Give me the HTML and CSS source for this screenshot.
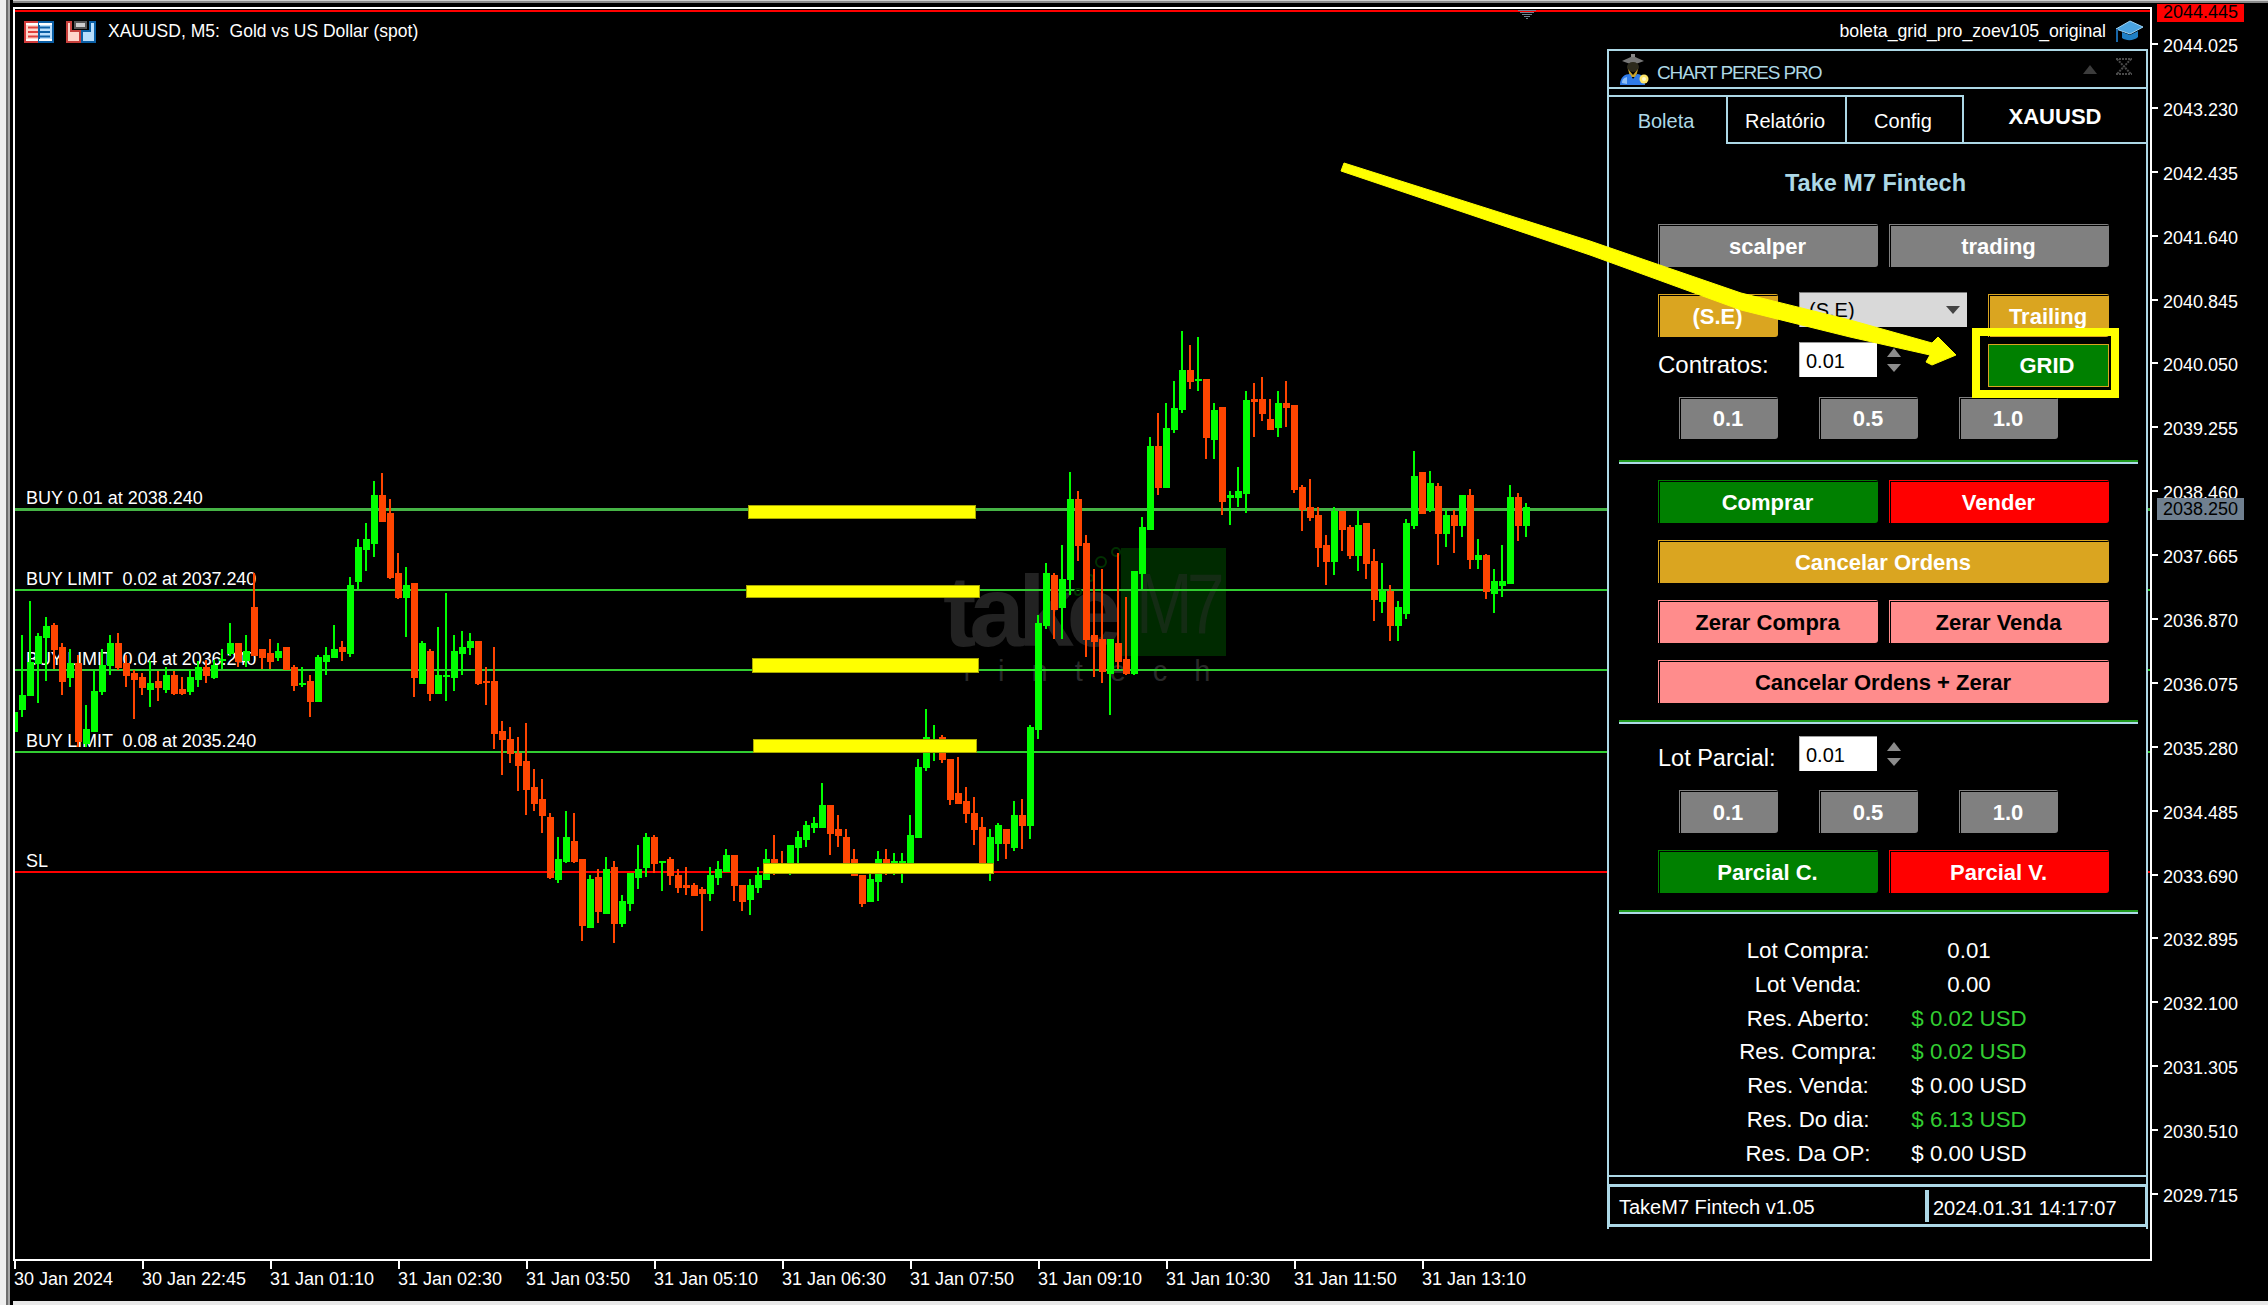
FILE: index.html
```html
<!DOCTYPE html>
<html lang="pt">
<head>
<meta charset="utf-8">
<title>XAUUSD M5</title>
<link rel="stylesheet" href="styles.css">
</head>
<body>
<div class="page">
  <div class="terminal">
    <div class="edge"></div>
    <div class="strip-top"></div>
    <div class="strip-gap"></div>

    <main class="chart">
      <div class="watermark">
        <span class="wm-take">take</span>
        <span class="wm-box"><span class="wm-m7">M7</span></span>
        <span class="wm-fin">fintech</span>
      </div>
      <div class="level lvl-1">BUY 0.01 at 2038.240</div>
      <div class="level lvl-2">BUY LIMIT&nbsp; 0.02 at 2037.240</div>
      <div class="level lvl-3">BUY LIMIT&nbsp; 0.04 at 2036.240</div>
      <div class="level lvl-4">BUY LIMIT&nbsp; 0.08 at 2035.240</div>
      <div class="level lvl-sl">SL</div>

      <svg class="candles" width="2268" height="1305" viewBox="0 0 2268 1305" aria-hidden="true">
        <g class="wm-dots">
          <circle cx="1116" cy="552" r="4"/><circle cx="1101" cy="562" r="5"/><circle cx="1090" cy="578" r="3"/><circle cx="1078" cy="592" r="3"/>
        </g>
        <g transform="translate(6 470) scale(8 .33333)">
          <path class="wick up" d="M1 700V800M2 495V740M3 393V678M4 490V698M5 441V633M8 537V650M10 705V830M11 600V787M12 537V675M13 495V615M18 573V711M20 591V669M23 600V675M24 573V651M26 570V627M27 537V598M28 459V558M30 495V591M34 519V573M37 591V651M39 555V697M40 531V615M41 465V564M43 321V561M44 207V357M45 159V303M46 33V261M50 291V501M52 513V642M54 471V672M55 369V693M56 495V663M57 483V615M58 489V555"/>
          <path class="body up" d="M1 725V785M2 675V720M3 575V678M4 497V583M5 467V503M8 580V625M10 778V822M11 664V785M12 586V665M13 520V588M18 640V660M20 616V660M23 622V666M24 592V630M26 586V624M27 568V572M28 520V553M30 544V572M34 544V564M37 640V644M39 562V696M40 556V576M41 538V564M43 346V552M44 232V335M45 208V240M46 76V222M50 346V384M52 520V642M54 616V672M55 616V622M56 544V624M57 532V552M58 514V534"/>
          <path class="wick dn" d="M6 459V597M7 519V675M9 555V830M14 489V600M15 555V651M16 600V747M17 609V675M19 603V693M21 603V675M22 621V675M25 570V639M29 519V590M31 310V558M32 538V597M33 507V597M35 532V600M36 585V663M38 615V741M42 513V573M47 9V155M48 87V327M49 249V387M51 340V681M53 537V693M59 514V645M60 591V705M61 531V837"/>
          <path class="body dn" d="M6 465V540M7 532V635M9 580V815M14 520V595M15 580V618M16 610V630M17 622V653M19 634V654M21 616V672M22 658V672M25 592V618M29 520V575M31 412V558M32 538V564M33 550V576M35 532V600M36 592V648M38 634V696M42 532V546M47 76V155M48 130V325M49 310V385M51 340V624M53 544V672M59 514V642M60 634V640M61 634V792"/>
        </g>
        <g transform="translate(6 700) scale(8 .33333)">
          <path class="wick up" d="M69 411V549M70 333V489M73 525V684M75 471V642M77 585V681M78 519V633M79 435V567M80 399V531M82 483V573M88 501V603M89 483V555M90 447V516M93 537V645M94 501V579M95 447V540M98 435V525M99 393V490M100 363V441M101 351V399M102 249V384M108 520V606M109 453V603M111 459V525M112 459V549M113 345V490M114 177V414M115 27V213M116 75V183M123 387V543M124 369V483M126 303V453M128 75V417"/>
          <path class="body up" d="M69 478V540M70 412V486M73 538V684M75 508V642M77 604V672M78 520V612M79 508V534M80 412V504M82 484V488M88 526V582M89 508V534M90 466V516M93 556V600M94 526V564M95 478V540M98 436V522M99 412V444M100 376V420M101 370V384M102 316V384M108 538V606M109 478V546M111 484V520M112 484V520M113 406V490M114 202V414M115 112V204M116 118V160M123 412V520M124 376V432M126 346V444M128 82V378"/>
          <path class="wick dn" d="M62 63V225M63 81V189M64 111V273M65 69V345M66 207V333M67 237V399M68 339V537M71 339V489M72 478V723M74 507V669M76 483V729M81 405V519M83 471V555M84 507V579M85 501V585M86 549V588M87 561V693M91 465V603M92 555V633M96 405V525M97 453V522M103 316V465M104 345V441M105 387V520M106 447V528M107 525V621M110 447V525M117 105V189M118 177V315M119 171V312M120 261V369M121 291V435M122 351V490M125 387V477M127 297V447"/>
          <path class="body dn" d="M62 94V120M63 118V162M64 160V198M65 184V270M66 262V312M67 298V348M68 352V534M71 424V486M72 478V678M74 532V636M76 502V672M81 412V492M83 478V528M84 526V564M85 556V564M86 556V588M87 568V582M91 466V558M92 556V606M96 478V520M97 490V520M103 316V402M104 388V408M105 412V490M106 478V528M107 526V612M110 478V522M117 112V180M118 178V300M119 280V312M120 304V342M121 340V390M122 382V490M125 388V432M127 346V378"/>
        </g>
        <g transform="translate(6 480) scale(8 .33333)">
          <path class="wick up" d="M129 405V777M130 249V447M132 195V477M133 -25V345M138 477V705M141 273V585M142 111V327M166 82V285M169 91V273M172 249V399M174 363V483M175 117V417M176 -87V147M178 -27V97M180 90V201M182 46V171M184 177V267M186 267V399M187 195V351M188 15V312M190 69V171"/>
          <path class="body up" d="M129 430V750M130 280V438M132 298V384M133 58V300M138 478V582M141 274V582M142 142V282M166 94V246M169 136V228M172 334V366M174 382V438M175 130V402M176 -12V138M178 10V90M180 105V162M182 46V138M184 226V240M186 304V342M187 304V318M188 52V312M190 82V138"/>
          <path class="wick dn" d="M131 280V477M134 33V243M135 165V531M136 267V591M137 267V609M139 219V567M140 351V585M162 15V153M163 -3V123M164 81V261M165 165V315M167 93V213M168 135V237M170 130V297M171 207V423M173 315V483M177 -24V102M179 9V255M181 90V219M183 27V267M185 222V357M189 39V183"/>
          <path class="body dn" d="M131 286V390M134 58V198M135 190V480M136 465V486M137 478V576M139 490V546M140 538V582M162 22V90M163 82V114M164 106V204M165 196V246M167 94V150M168 142V228M170 130V252M171 244V360M173 334V438M177 -24V102M179 17V162M181 106V138M183 46V240M185 226V336M189 52V138"/>
        </g>
        <g transform="translate(6 320) scale(8 .33333)">
          <path class="wick up" d="M143 351V630M145 249V504M146 183V339M147 33V279M149 51V213M151 249V417M153 513V615M154 441V561M155 213V579M159 213V351"/>
          <path class="body up" d="M143 378V630M145 324V504M146 264V330M147 150V270M149 178V182M151 270V360M153 526V534M154 514V534M155 240V522M159 250V324"/>
          <path class="wick dn" d="M144 279V525M148 75V207M150 178V417M152 261V585M156 189V351M157 171V303M158 237V330M160 183V321M161 256V519"/>
          <path class="body dn" d="M144 378V504M148 150V186M150 178V354M152 262V546M156 238V246M157 238V282M158 298V330M160 250V264M161 256V510"/>
        </g>
        <g class="bars">
          <rect x="748.5" y="505.5" width="227" height="13"/>
          <rect x="746.5" y="585.5" width="233" height="12"/>
          <rect x="752.5" y="658.5" width="226" height="14"/>
          <rect x="753.5" y="739.5" width="223" height="13"/>
          <rect x="763.5" y="863.5" width="230" height="10"/>
        </g>
      </svg>

      <header class="chart-head">
        <div class="head-left">
          <svg class="ico" width="30" height="22" viewBox="0 0 30 22" aria-hidden="true">
            <rect x="1" y="1" width="14" height="20" fill="#ffd6cc" stroke="#d23c3c" stroke-width="2"/>
            <rect x="2" y="2" width="13" height="2" fill="#fff"/><rect x="2" y="18" width="13" height="2" fill="#fff"/>
            <path d="M4 6.500H14M4 11H14M4 15.500H14" stroke="#e0403c" stroke-width="2"/>
            <rect x="15" y="1" width="14" height="20" fill="#b9defc" stroke="#0b5fa5" stroke-width="2"/>
            <rect x="15" y="2" width="13" height="2" fill="#fff"/><rect x="15" y="18" width="13" height="2" fill="#fff"/>
            <path d="M16 6.500H26M16 11H26M16 15.500H26" stroke="#0b5fa5" stroke-width="2"/>
          </svg>
          <svg class="ico ico-2" width="30" height="22" viewBox="0 0 30 22" aria-hidden="true">
            <path d="M1 1H5V10H14V21H1Z" fill="#ffd6cc" stroke="#c8403c" stroke-width="2"/>
            <path d="M29 1H24V10H16V21H29Z" fill="#b9defc" stroke="#0b5fa5" stroke-width="2"/>
            <rect x="9" y="1" width="11" height="6" fill="#ccc" stroke="#555" stroke-width="2"/>
          </svg>
          <span class="symbol">XAUUSD, M5:  Gold vs US Dollar (spot)</span>
        </div>
        <div class="head-right">
          <span class="ea-name">boleta_grid_pro_zoev105_original</span>
          <svg width="29" height="23" viewBox="0 0 29 23" aria-hidden="true">
            <path d="M1 9L15 1L28 7L15 14Z" fill="#4aa3e0" stroke="#9fd4f5"/>
            <path d="M7 12V18C11 21 19 21 23 17V11L15 15Z" fill="#1f7fc4"/>
            <path d="M2 9V22" stroke="#1766a8" stroke-width="2"/>
          </svg>
        </div>
      </header>
    </main>

    <aside class="price-axis">
      <div class="price">2044.025</div><div class="price">2043.230</div><div class="price">2042.435</div><div class="price">2041.640</div><div class="price">2040.845</div><div class="price">2040.050</div><div class="price">2039.255</div><div class="price">2038.460</div><div class="price">2037.665</div><div class="price">2036.870</div><div class="price">2036.075</div><div class="price">2035.280</div><div class="price">2034.485</div><div class="price">2033.690</div><div class="price">2032.895</div><div class="price">2032.100</div><div class="price">2031.305</div><div class="price">2030.510</div><div class="price">2029.715</div>
    </aside>

    <nav class="time-axis">
      <div class="time">30 Jan 2024</div><div class="time">30 Jan 22:45</div><div class="time">31 Jan 01:10</div><div class="time">31 Jan 02:30</div><div class="time">31 Jan 03:50</div><div class="time">31 Jan 05:10</div><div class="time">31 Jan 06:30</div><div class="time">31 Jan 07:50</div><div class="time">31 Jan 09:10</div><div class="time">31 Jan 10:30</div><div class="time">31 Jan 11:50</div><div class="time">31 Jan 13:10</div>
    </nav>
    <div class="strip-bottom"></div>
  </div>

  <div class="price-tag tag-ask">2044.445</div>
  <div class="price-tag tag-bid">2038.250</div>

  <section class="panel">
    <div class="caption">
      <svg width="30" height="31" viewBox="0 0 30 31" aria-hidden="true">
        <path d="M3 7L14 2L25 7L14 11Z" fill="#777"/>
        <rect x="12" y="0" width="4" height="3" fill="#888"/>
        <ellipse cx="14" cy="13" rx="6" ry="5" fill="#2c2a1c"/>
        <path d="M9 15L14 21L19 15L17 23H11Z" fill="#c9a227"/>
        <path d="M1 31C1 23 6 20 11 20L14 25L18 20C23 20 26 24 26 31Z" fill="#2f7be8"/>
        <path d="M3 29C3 25 5 24 8 23V30Z" fill="#8fc0f8"/>
        <circle cx="25" cy="25" r="4.500" fill="#ffe76a"/>
        <circle cx="25" cy="25" r="2" fill="#fffbd0"/>
      </svg>
      <span class="cap-title">CHART PERES PRO</span>
      <svg class="cap-min" width="14" height="9" viewBox="0 0 14 9" aria-hidden="true"><path d="M7 0L14 9H0Z"/></svg>
      <svg class="cap-close" width="18" height="17" viewBox="0 0 18 17" aria-hidden="true">
        <path d="M1 1H17M1 16H17M2 1L16 16M16 1L2 16" stroke-dasharray="2 1"/>
      </svg>
    </div>
    <div class="tabs">
      <div class="tab tab-active">Boleta</div>
      <div class="tab tab-mid">Relatório</div>
      <div class="tab tab-last">Config</div>
      <div class="tab-symbol">XAUUSD</div>
    </div>
    <div class="panel-body">
      <h1 class="panel-title">Take M7 Fintech</h1>
      <div class="row-two mt-scalper">
        <div class="btn gray">scalper</div>
        <div class="btn gray">trading</div>
      </div>
      <div class="row-mode">
        <div class="btn gold mode-btn">(S.E)</div>
        <div class="select"><span>(S.E)</span><svg width="14" height="8" viewBox="0 0 14 8" aria-hidden="true"><path d="M0 0H14L7 8Z"/></svg></div>
        <div class="btn gold mode-btn">Trailing</div>
      </div>
      <div class="row-lot">
        <div class="lot-label contracts">Contratos:</div>
        <div class="input">0.01</div>
        <div class="spin"><i class="spin-up"></i><i class="spin-down"></i></div>
        <div class="btn grid-btn">GRID</div>
      </div>
      <div class="row-three short mt-10">
        <div class="btn gray">0.1</div><div class="btn gray">0.5</div><div class="btn gray">1.0</div>
      </div>
      <div class="sep mt-21"></div>
      <div class="row-two mt-16">
        <div class="btn green">Comprar</div>
        <div class="btn red">Vender</div>
      </div>
      <div class="btn gold wide mt-17">Cancelar Ordens</div>
      <div class="row-two mt-17">
        <div class="btn pink">Zerar Compra</div>
        <div class="btn pink">Zerar Venda</div>
      </div>
      <div class="btn pink wide mt-17">Cancelar Ordens + Zerar</div>
      <div class="sep mt-17"></div>
      <div class="row-lot row-partial">
        <div class="lot-label">Lot Parcial:</div>
        <div class="input">0.01</div>
        <div class="spin"><i class="spin-up"></i><i class="spin-down"></i></div>
      </div>
      <div class="row-three mt-19">
        <div class="btn gray">0.1</div><div class="btn gray">0.5</div><div class="btn gray">1.0</div>
      </div>
      <div class="row-two mt-17">
        <div class="btn green">Parcial C.</div>
        <div class="btn red">Parcial V.</div>
      </div>
      <div class="sep mt-17"></div>
      <div class="stats">
        <div>Lot Compra:</div><div>0.01</div>
        <div>Lot Venda:</div><div>0.00</div>
        <div>Res. Aberto:</div><div class="pos">$ 0.02 USD</div>
        <div>Res. Compra:</div><div class="pos">$ 0.02 USD</div>
        <div>Res. Venda:</div><div>$ 0.00 USD</div>
        <div>Res. Do dia:</div><div class="pos">$ 6.13 USD</div>
        <div>Res. Da OP:</div><div>$ 0.00 USD</div>
      </div>
    </div>
    <footer class="panel-foot">
      <span class="foot-name">TakeM7 Fintech v1.05</span>
      <span class="foot-date">2024.01.31 14:17:07</span>
    </footer>
  </section>

  <svg class="overlay" width="2268" height="1305" viewBox="0 0 2268 1305" aria-hidden="true">
    <g class="ask-mark">
      <rect x="1518" y="10" width="18" height="1"/><rect x="1520" y="12" width="14" height="1"/><rect x="1522" y="14" width="10" height="1"/><rect x="1524" y="16" width="6" height="1"/><rect x="1526" y="18" width="2" height="1"/>
    </g>
    <polygon class="arrow" points="1344,163 1590,241 1741,293 1850,320 1932,343 1938,337 1956,355 1932,365 1926,362 1930,355 1850,337 1741,310 1590,255 1341,171"/>
    <rect class="grid-mark" x="1976" y="332" width="139" height="62"/>
  </svg>
</div>
</body>
</html>
```

FILE: styles.css
```css
* { box-sizing: border-box; }
html, body { margin: 0; padding: 0; background: #000; overflow: hidden; }
body { font-family: "Liberation Sans", Arial, sans-serif; color: #fff; }

.page { position: relative; width: 2268px; height: 1305px; overflow: hidden; background: #000; }

.terminal {
  display: grid;
  width: 2268px;
  height: 1305px;
  grid-template-columns: 13px 2139px 116px;
  grid-template-rows: 3px 4px 1254px 40px 4px;
}
.edge {
  grid-column: 1;
  grid-row: 1 / -1;
  background: linear-gradient(90deg, #efefef 0 6px, #6f6f6f 6px 8px, #a8a8a8 8px 10px, #000 10px);
}
.strip-top { grid-column: 2 / -1; grid-row: 1; background: linear-gradient(#d0d0d0 0 1px, #8a8a8a 1px); }
.strip-gap { grid-column: 2 / -1; grid-row: 2; background: #000; }
.strip-bottom { grid-column: 2 / -1; grid-row: 5; background: #e8e8e8; }

/* chart */
.chart {
  grid-column: 2;
  grid-row: 3;
  position: relative;
  overflow: hidden;
  background: #000;
  border: 2px solid #fff;
}
.chart::before {
  content: "";
  position: absolute;
  left: 0; right: 0; top: 1px;
  height: 2px;
  background: #f00;
}
.candles { position: absolute; left: -15px; top: -9px; }
.wick, .body { fill: none; vector-effect: non-scaling-stroke; shape-rendering: crispEdges; }
.wick { stroke-width: 2px; }
.body { stroke-width: 7px; }
.up { stroke: #00ff00; }
.dn { stroke: #ff4500; }
.bars rect { fill: #ffff00; stroke: #a8a800; stroke-width: 1; }
.wm-dots circle { fill: none; stroke: #003000; stroke-width: 2; }

.level {
  position: absolute;
  left: 0; right: 0;
  height: 23px;
  padding-left: 11px;
  font-size: 18px;
  line-height: 23px;
  letter-spacing: -.1px;
  color: #fff;
  white-space: pre;
  border-bottom: 2px solid #32cd32;
}
.lvl-1 { top: 478px; border-bottom-width: 3px; border-bottom-color: #46b446; height: 24px; letter-spacing: 0; }
.lvl-2 { top: 559px; }
.lvl-3 { top: 639px; }
.lvl-4 { top: 721px; }
.lvl-sl { top: 841px; border-bottom-color: #f00; }

.watermark { position: absolute; left: 0; top: 0; width: 100%; height: 100%; }
.wm-take {
  position: absolute;
  left: 928px; top: 552px;
  font-size: 100px;
  line-height: 100px;
  font-weight: 700;
  letter-spacing: -7px;
  color: #222;
}
.wm-box { position: absolute; left: 1106px; top: 539px; width: 105px; height: 108px; background: #002a00; }
.wm-m7 {
  position: absolute;
  left: 15px; top: 12px;
  font-size: 68px;
  line-height: 86px;
  letter-spacing: -6px;
  color: #142c14;
  transform: scaleY(1.25);
}
.wm-fin {
  position: absolute;
  left: 948px; top: 646px;
  font-size: 29px;
  line-height: 32px;
  letter-spacing: 27px;
  color: #2a2a2a;
}

.chart-head {
  position: absolute;
  left: 0; right: 0; top: 11px;
  height: 23px;
  padding: 0 6px 0 9px;
  display: flex;
  justify-content: space-between;
  align-items: center;
}
.head-left, .head-right { display: flex; align-items: center; }
.ico-2 { margin-left: 12px; }
.symbol { margin-left: 12px; font-size: 17.500px; white-space: pre; }
.ea-name { margin-right: 9px; font-size: 17.700px; }

/* price axis */
.price-axis { grid-column: 3; grid-row: 3; padding-top: 36px; }
.price { position: relative; height: 63.900px; padding-left: 11px; font-size: 18px; line-height: 6px; color: #fff; }
.price::before { content: ""; position: absolute; left: 0; top: 0; width: 6px; height: 2px; background: #fff; }

.price-tag {
  position: absolute;
  left: 2157px;
  width: 87px;
  padding-left: 6px;
  font-size: 18px;
  color: #000;
}
.tag-ask { top: 4px; height: 18px; line-height: 17px; background: #f00; }
.tag-bid { top: 498px; height: 22px; line-height: 22px; background: #708090; }

/* time axis */
.time-axis { grid-column: 2 / -1; grid-row: 4; display: flex; padding-left: 1px; }
.time {
  position: relative;
  flex: 0 0 128px;
  padding: 9px 0 0 0;
  font-size: 18px;
  line-height: 18px;
  white-space: nowrap;
}
.time::before { content: ""; position: absolute; left: 0; top: 0; width: 2px; height: 8px; background: #fff; }

/* panel */
.panel {
  position: absolute;
  left: 1607px; top: 49px;
  width: 541px;
  height: 1180px;
  border: 2px solid #add8e6;
  border-bottom: 0;
  background: #000;
  display: flex;
  flex-direction: column;
}
.caption {
  flex: none;
  height: 38px;
  border-bottom: 2px solid #add8e6;
  display: flex;
  align-items: center;
  padding-left: 10px;
}
.cap-title { margin: 7px 0 0 8px; font-size: 19px; letter-spacing: -1.100px; color: #add8e6; }
.cap-min { margin-left: auto; fill: #3c3c3c; }
.cap-close { margin: 0 13px 6px 18px; fill: none; stroke: #4a4a4a; stroke-width: 2; }

.tabs { flex: none; display: flex; height: 49px; margin-top: 6px; }
.tab {
  height: 49px;
  padding: 1px 3px 0 0;
  border-top: 2px solid #add8e6;
  font-size: 20px;
  line-height: 47px;
  text-align: center;
  color: #fff;
}
.tab-active { width: 117px; color: #add8e6; }
.tab-mid { width: 119px; border-left: 2px solid #add8e6; border-bottom: 2px solid #add8e6; }
.tab-last { width: 119px; border-left: 2px solid #add8e6; border-right: 2px solid #add8e6; border-bottom: 2px solid #add8e6; }
.tab-symbol {
  flex: 1;
  height: 49px;
  border-bottom: 2px solid #add8e6;
  font-size: 22px;
  font-weight: 700;
  line-height: 44px;
  text-align: center;
}

.panel-body {
  flex: none;
  height: 1033px;
  padding-left: 49px;
  border-bottom: 2px solid #add8e6;
}
.panel-title {
  width: 533px;
  margin: 24px 0 0 -49px;
  font-size: 23.500px;
  font-weight: 700;
  line-height: 30px;
  text-align: center;
  color: #add8e6;
}
.mt-scalper { margin-top: 26px; }
.mt-10 { margin-top: 10px; }
.mt-16 { margin-top: 16px; }
.mt-17 { margin-top: 17px; }
.mt-19 { margin-top: 19px; }
.mt-21 { margin-top: 21px; }

.btn {
  --c: #808080;
  display: flex;
  align-items: center;
  justify-content: center;
  height: 43px;
  padding: 1px 0 0 1px;
  border-top: 1px solid var(--c);
  border-left: 1px solid var(--c);
  border-radius: 0 2px 3px 0;
  background: var(--c);
  background-clip: content-box;
  font-size: 22px;
  font-weight: 700;
  color: #fff;
  white-space: nowrap;
}
.btn::after { content: ""; flex: none; width: 3px; }
.gray { --c: #808080; }
.gold { --c: #daa520; }
.green { --c: #008000; }
.red { --c: #ff0000; }
.pink { --c: #ff8c8c; color: #000; }
.wide { width: 451px; }

.row-two { display: grid; grid-template-columns: 220px 220px; gap: 11px; height: 43px; }
.row-three { display: grid; grid-template-columns: repeat(3, 99px); gap: 41px; height: 43px; margin-left: 21px; }
.row-three.short { height: 42px; }
.short .btn { height: 42px; }
.row-mode { display: grid; grid-template-columns: 120px 168px 121px; gap: 21px; height: 45px; margin-top: 25px; }
.mode-btn { margin-top: 2px; }
.select {
  display: flex;
  align-items: center;
  justify-content: space-between;
  height: 35px;
  padding: 0 7px 0 9px;
  background: #d9d9d9;
  border-top: 1px solid #777;
  border-left: 1px solid #999;
  font-size: 20px;
  color: #000;
}
.select svg { fill: #444; }

.row-lot { display: grid; grid-template-columns: 141px 78px 111px 121px; height: 45px; margin-top: 5px; width: 451px; }
.row-lot > .grid-btn { grid-column: 4; }
.row-partial { height: 35px; margin-top: 12px; }
.lot-label { font-size: 23.500px; line-height: 35px; margin-top: 5px; white-space: nowrap; }
.contracts { font-size: 24px; }
.input {
  height: 35px;
  padding-left: 6px;
  background: #fff;
  border-top: 1px solid #999;
  border-left: 1px solid #bbb;
  font-size: 20px;
  line-height: 36px;
  color: #000;
}
.spin { display: flex; flex-direction: column; gap: 7px; margin: 6px 0 0 10px; }
.spin-up, .spin-down { display: block; width: 0; height: 0; border-left: 7px solid transparent; border-right: 7px solid transparent; }
.spin-up { border-bottom: 9px solid #8c8c8c; }
.spin-down { border-top: 8px solid #8c8c8c; }
.grid-btn {
  margin-top: 2px;
  padding: 0;
  border: 1px solid #daa520;
  border-radius: 0;
  background: #008000;
}

.sep {
  width: 519px;
  height: 4px;
  margin-left: -39px;
  border-top: 2px solid #1f9a1f;
  border-bottom: 2px solid #add8e6;
}
.stats {
  display: grid;
  grid-template-columns: 200px 122px;
  grid-auto-rows: 33.800px;
  margin: 20px 0 0 50px;
  font-size: 22.300px;
  line-height: 33.800px;
  text-align: center;
  white-space: nowrap;
}
.pos { color: #32cd32; }

.panel-foot {
  flex: none;
  display: flex;
  align-items: center;
  height: 43px;
  margin: 7px -2px 0;
  padding-left: 9px;
  border: 3px solid #add8e6;
  font-size: 20px;
}
.foot-name { width: 306px; margin-top: 3px; }
.foot-date { height: 32px; padding-left: 4px; border-left: 4px solid #add8e6; line-height: 36px; }

/* overlays */
.overlay { position: absolute; left: 0; top: 0; }
.arrow { fill: #ffff00; stroke: #ffff00; stroke-width: 1; stroke-linejoin: round; }
.grid-mark { fill: none; stroke: #ffff00; stroke-width: 8; }
.ask-mark rect { fill: #708090; }
```
